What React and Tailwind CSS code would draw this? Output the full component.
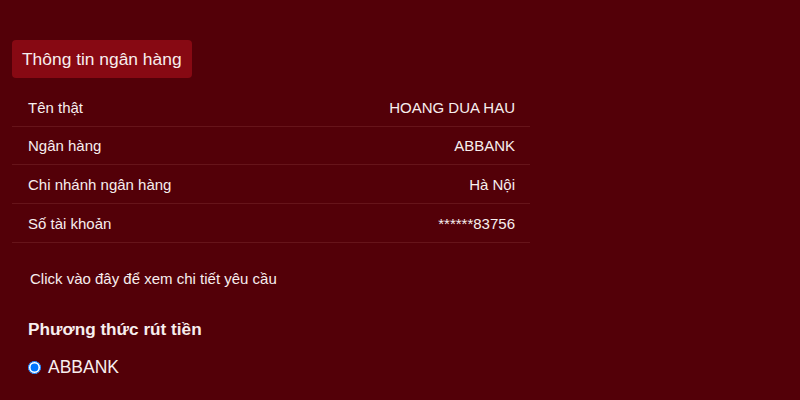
const ROWS = [
  ["Tên thật", "HOANG DUA HAU"],
  ["Ngân hàng", "ABBANK"],
  ["Chi nhánh ngân hàng", "Hà Nội"],
  ["Số tài khoản", "******83756"],
];

export default function App() {
  return (
    <div className="h-[400px] w-[800px] overflow-hidden bg-[#530008] font-['Liberation_Sans',Arial,sans-serif] text-[#f7eeee]">
      <div className="pl-3 pt-10">
        <div className="inline-flex h-[38px] items-center rounded-[4px] bg-[#870913] px-[10px] text-[17.4px]">
          Thông tin ngân hàng
        </div>
        <div className="mt-[10px] w-[518px]">
          {ROWS.map(([label, value]) => (
            <div
              key={label}
              className="flex h-[38.7px] items-center justify-between border-b border-[#66141a] pb-[1px] pl-4 pr-[15px] pt-[3px] text-[15px]"
            >
              <span>{label}</span>
              <span>{value}</span>
            </div>
          ))}
        </div>
        <p className="mt-[25px] pl-[18px] text-[15px]">Click vào đây để xem chi tiết yêu cầu</p>
        <h3 className="mt-[27px] pl-4 text-[17.2px] font-bold">Phương thức rút tiền</h3>
        <label className="mt-[11px] flex items-center gap-[7px] pl-4 text-[17.5px]">
          <input type="radio" name="method" defaultChecked className="m-0 h-[13px] w-[13px]" />
          ABBANK
        </label>
        <label className="mt-[20px] flex items-center gap-[7px] pl-4 text-[17.5px]">
          <input type="radio" name="method" className="m-0 h-[13px] w-[13px]" />
          Ví điện tử
        </label>
      </div>
    </div>
  );
}
